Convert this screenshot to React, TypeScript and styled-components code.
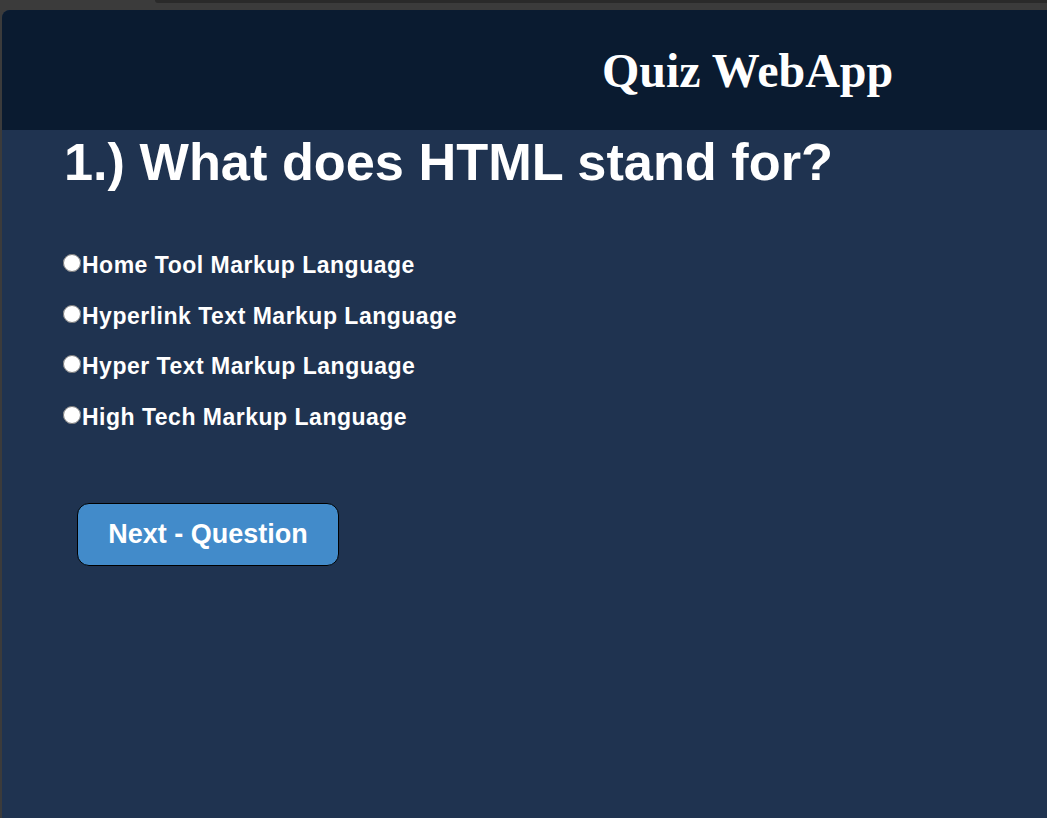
import React from "react";
import styled, { createGlobalStyle } from "styled-components";

const Global = createGlobalStyle`
  html, body { margin: 0; padding: 0; background: #3b3b3b; }
  body { font-family: "Liberation Sans", Arial, sans-serif; }
`;

const Chrome = styled.div`
  height: 10px;
  display: flex;
  justify-content: flex-end;
`;

const TabStrip = styled.div`
  width: 892px;
  height: 3px;
  background: #2a2a2a;
  border-bottom-left-radius: 6px;
`;

const Frame = styled.div`
  margin-left: 2px;
  border-top-left-radius: 8px;
  overflow: hidden;
  background: #1f3350;
  height: 808px;
`;

const Header = styled.header`
  height: 120px;
  background: #0a1b30;
  display: flex;
  align-items: center;
  padding-left: 600px;
`;

const Title = styled.h1`
  margin: 0;
  color: #fff;
  font-family: "Liberation Serif", "Times New Roman", serif;
  font-weight: bold;
  font-size: 48px;
`;

const Main = styled.main`
  padding: 0 0 0 60px;
`;

const Question = styled.h2`
  margin: 0 0 0 2px;
  padding-top: 2px;
  color: #fff;
  font-size: 52.3px;
  font-weight: bold;
`;

const Options = styled.div`
  margin-top: 60px;
  display: flex;
  flex-direction: column;
  gap: 24.5px;
`;

const Option = styled.label`
  display: flex;
  align-items: center;
  color: #fff;
  font-size: 23px;
  letter-spacing: 0.5px;
  font-weight: bold;
  line-height: 26px;
`;

const Radio = styled.input`
  margin: 0 1px 4px 1px;
  width: 18px;
  height: 18px;
`;

const NextButton = styled.button`
  margin: 73px 0 0 15px;
  width: 262px;
  height: 63px;
  background: #428bca;
  border: 1px solid #000;
  border-radius: 12px;
  color: #fff;
  font-family: "Liberation Sans", Arial, sans-serif;
  font-weight: bold;
  font-size: 27px;
`;

const options = [
  "Home Tool Markup Language",
  "Hyperlink Text Markup Language",
  "Hyper Text Markup Language",
  "High Tech Markup Language",
];

export default function App() {
  return (
    <>
      <Global />
      <Chrome>
        <TabStrip />
      </Chrome>
      <Frame>
        <Header>
          <Title>Quiz WebApp</Title>
        </Header>
        <Main>
          <Question>1.) What does HTML stand for?</Question>
          <Options>
            {options.map((o) => (
              <Option key={o}>
                <Radio type="radio" name="q" />
                {o}
              </Option>
            ))}
          </Options>
          <NextButton>Next - Question</NextButton>
        </Main>
      </Frame>
    </>
  );
}
